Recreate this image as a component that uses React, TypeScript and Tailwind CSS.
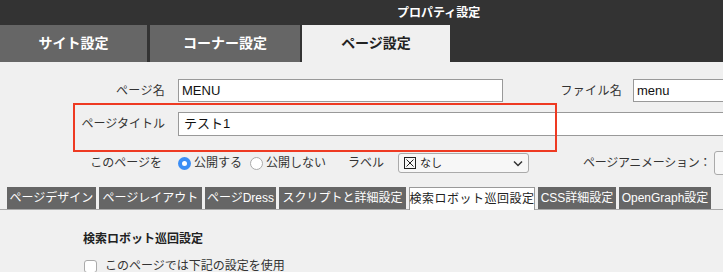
import React from "react";

const subTabs = [
  { label: "ページデザイン", w: "w-[89px]" },
  { label: "ページレイアウト", w: "w-[103px]" },
  { label: "ページDress", w: "w-[71px]" },
  { label: "スクリプトと詳細設定", w: "w-[127px]" },
];
const subTabsAfter = [
  { label: "CSS詳細設定", w: "w-[78px]" },
  { label: "OpenGraph設定", w: "w-[92px]" },
];

export default function App() {
  return (
    <div className="relative w-[723px] h-[272px] overflow-hidden bg-[#f0f0f0] font-['Liberation_Sans','Noto_Sans_CJK_JP',sans-serif] text-[#333]">
      {/* header */}
      <div className="h-[25px] bg-[#333333] flex items-center">
        <div className="pl-[397px] text-white text-[12px] font-bold leading-none whitespace-nowrap">プロパティ設定</div>
      </div>
      <div className="h-[37px] bg-[#333333] flex">
        <div className="w-[147px] shrink-0 bg-[#666666] text-white text-[14px] font-bold flex items-center justify-center">サイト設定</div>
        <div className="w-[150px] shrink-0 ml-[3px] bg-[#666666] text-white text-[14px] font-bold flex items-center justify-center">コーナー設定</div>
        <div className="w-[148px] shrink-0 ml-[2px] bg-[#f0f0f0] text-[#222] text-[14px] font-bold flex items-center justify-center">ページ設定</div>
      </div>

      {/* form */}
      <div className="pt-[17px] whitespace-nowrap">
        <div className="flex items-center h-[23px]">
          <div className="w-[165px] shrink-0 text-right text-[12px] tracking-[0.3px]">ページ名</div>
          <div className="ml-[13px] w-[325px] shrink-0 h-[23px] bg-white border border-[#999] px-[3px] flex items-center text-[13px] text-[#111]">MENU</div>
          <div className="w-[119px] shrink-0 text-right text-[12px] tracking-[0.3px]">ファイル名</div>
          <div className="ml-[11px] w-[120px] h-[23px] bg-white border border-[#999] px-[3px] flex items-center text-[13px] text-[#111] shrink-0">menu</div>
        </div>
        <div className="flex items-center h-[24px] mt-[10px]">
          <div className="w-[165px] shrink-0 text-right text-[12px]">ページタイトル</div>
          <div className="ml-[13px] w-[600px] shrink-0 h-[24px] bg-white border border-[#999] px-[5px] flex items-center text-[13px] text-[#111]">テスト1</div>
        </div>
        <div className="flex items-center h-[20px] mt-[17px] text-[12px]">
          <div className="w-[162px] shrink-0 text-right">このページを</div>
          <div className="ml-[16px] shrink-0 w-[13px] h-[13px] rounded-full bg-[#3b8ef5] flex items-center justify-center">
            <div className="w-[5px] h-[5px] rounded-full bg-white" />
          </div>
          <div className="ml-[3px] shrink-0">公開する</div>
          <div className="ml-[8px] shrink-0 w-[13px] h-[13px] rounded-full bg-white border border-[#aaa]" />
          <div className="ml-[3px] shrink-0">公開しない</div>
          <div className="ml-[22px] shrink-0">ラベル</div>
          <div className="ml-[14px] w-[131px] h-[20px] border border-[#aaa] rounded-[3px] bg-[#f7f7f7] flex items-center px-[5px] shrink-0">
            <svg width="12" height="12" viewBox="0 0 12 12" className="shrink-0">
              <rect x="0.5" y="0.5" width="11" height="11" fill="none" stroke="#222" strokeWidth="1" />
              <path d="M2.5 2.5 L9.5 9.5 M9.5 2.5 L2.5 9.5" stroke="#222" strokeWidth="1" />
            </svg>
            <span className="ml-[4px] text-[11px] text-[#222]">なし</span>
            <svg className="ml-auto" width="10" height="7" viewBox="0 0 10 7">
              <path d="M1 1.5 L5 5.5 L9 1.5" fill="none" stroke="#333" strokeWidth="1.5" />
            </svg>
          </div>
          <div className="ml-[54px] shrink-0 tracking-[-0.3px]">ページアニメーション：</div>
          <div className="ml-[3px] w-[60px] h-[24px] border border-[#aaa] rounded-[3px] bg-[#f7f7f7] shrink-0" />
        </div>
      </div>

      {/* sub tabs */}
      <div className="mt-[14px] h-[23px] border-b border-[#aaa] flex items-start pl-[7px] gap-[3px]">
        {subTabs.map((t) => (
          <div key={t.label} className={`${t.w} h-[22px] bg-[#666666] text-white text-[12px] flex items-center justify-center whitespace-nowrap shrink-0`}>
            {t.label}
          </div>
        ))}
        <div className="w-[126px] h-[23px] bg-white border border-b-0 border-[#999] text-[#222] text-[12px] flex items-center justify-center whitespace-nowrap shrink-0 tracking-[0.5px]">
          検索ロボット巡回設定
        </div>
        {subTabsAfter.map((t) => (
          <div key={t.label} className={`${t.w} h-[22px] bg-[#666666] text-white text-[12px] flex items-center justify-center whitespace-nowrap shrink-0`}>
            {t.label}
          </div>
        ))}
      </div>

      <div className="pl-[83px] pt-[20px] whitespace-nowrap">
        <div className="text-[12px] font-bold text-[#222] leading-[18px]">検索ロボット巡回設定</div>
        <div className="mt-[10px] flex items-center">
          <div className="w-[13px] h-[13px] shrink-0 bg-white border border-[#aaa] rounded-[3px] ml-[1px]" />
          <div className="ml-[8px] text-[12px] leading-[16px]">このページでは下記の設定を使用</div>
        </div>
      </div>

      {/* annotation box */}
      <div className="absolute left-[73px] top-[103px] w-[484px] h-[49px] border-2 border-[#ee3a22]" />
    </div>
  );
}
